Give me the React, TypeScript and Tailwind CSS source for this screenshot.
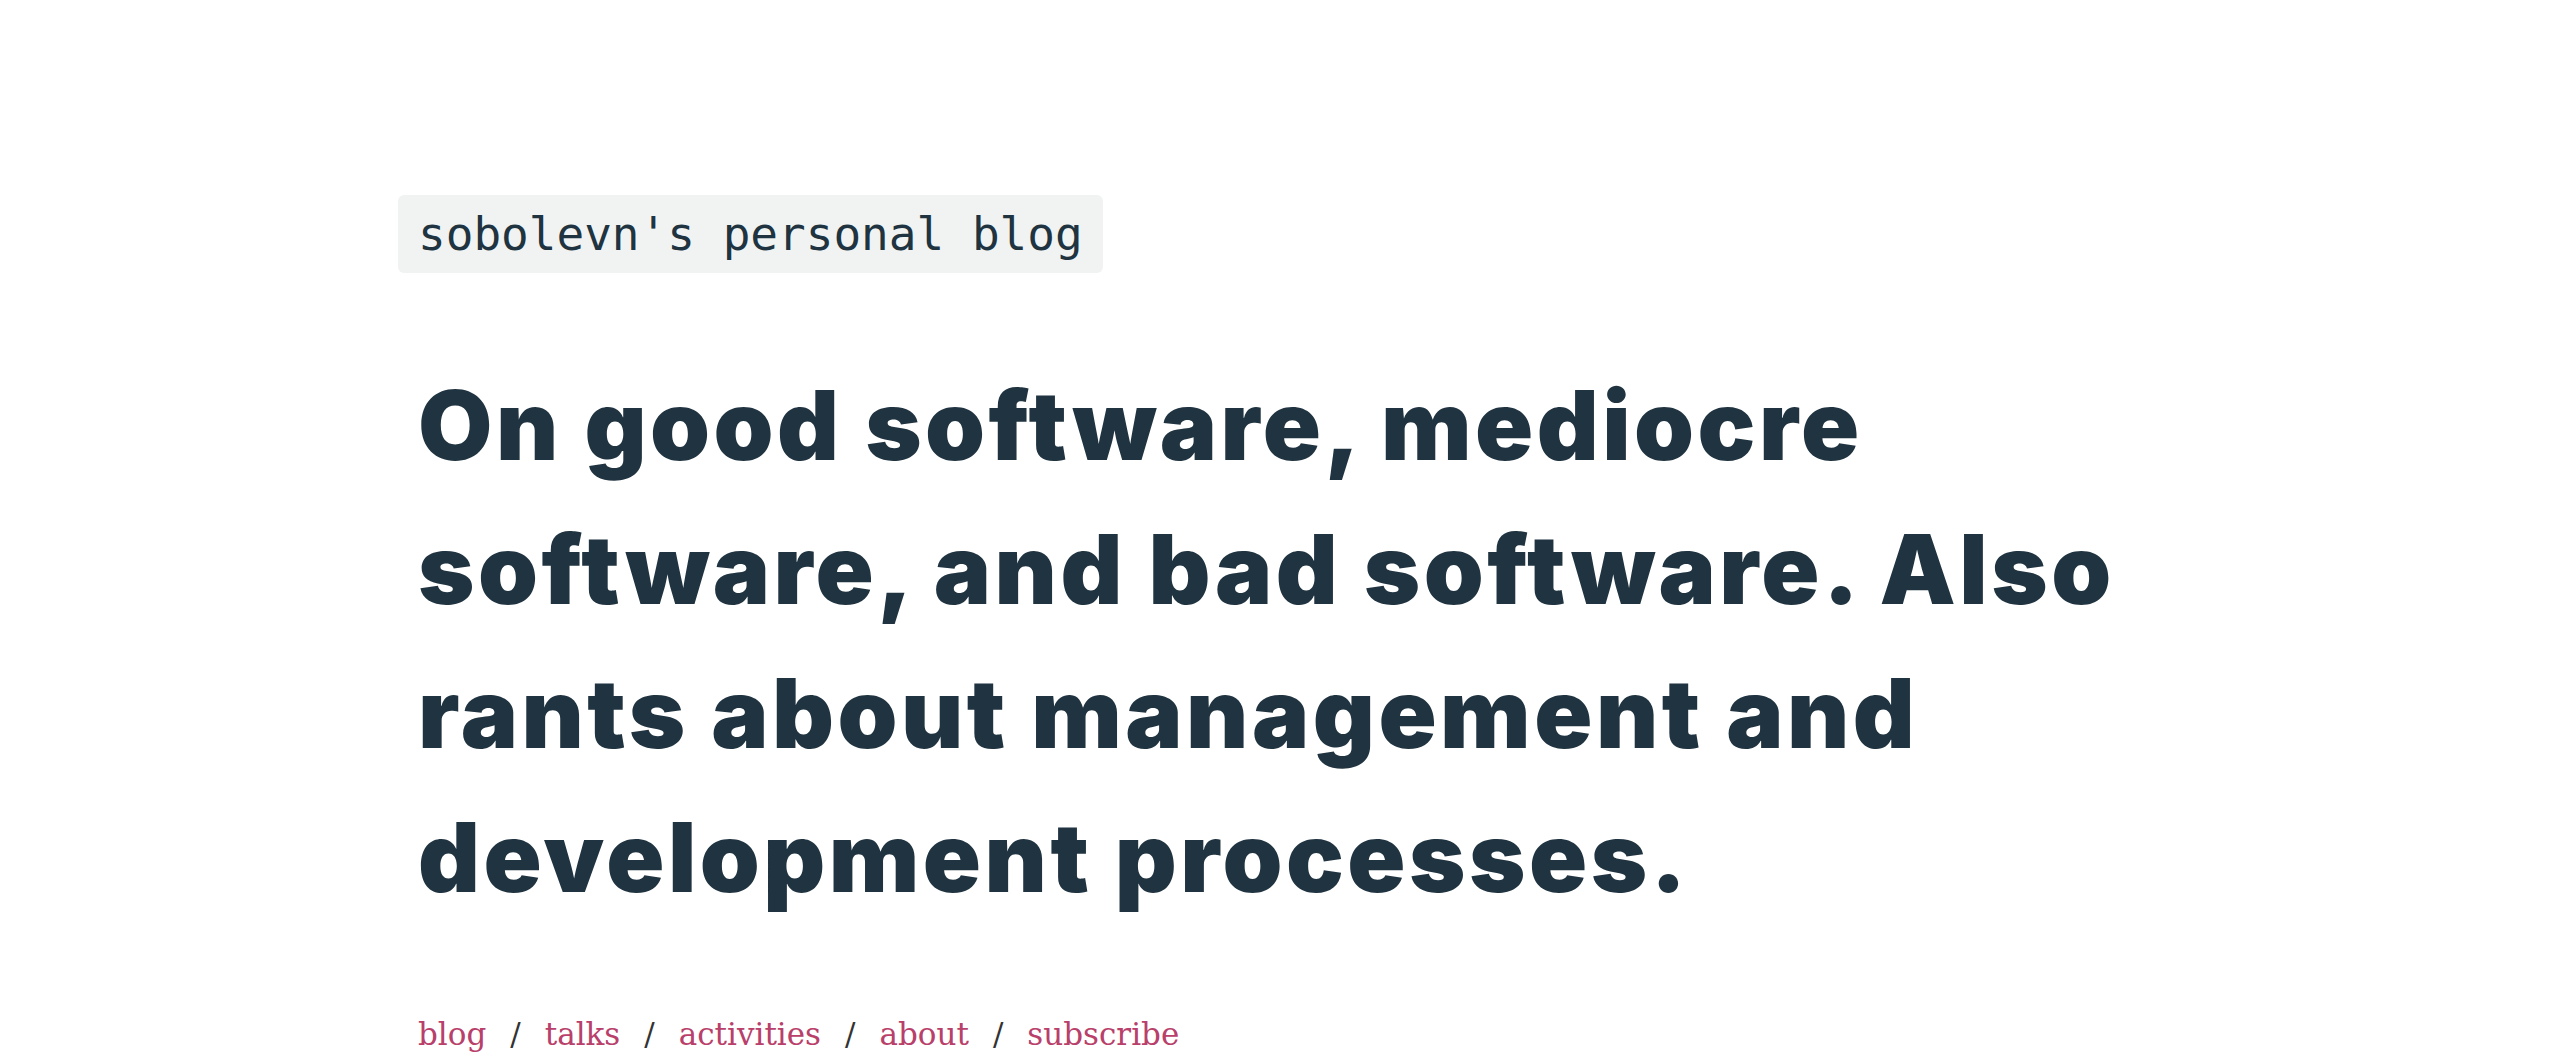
import React from "react";

const links = ["blog", "talks", "activities", "about", "subscribe"];

const App = () => {
  return (
    <div className="min-h-screen bg-white">
      <div className="mx-auto w-[1764px] pt-[195px]">
        <div className="inline-flex h-[78px] items-center rounded-md bg-[#f1f3f3] px-5">
          <span className="font-['DejaVu_Sans_Mono',monospace] text-[46px] leading-[78px] text-[#203340]">
            sobolevn's personal blog
          </span>
        </div>
        <h1 className="mt-[80px] pl-5 font-['Inter',sans-serif] text-[96px] font-black leading-[144px] tracking-[3.5px] text-[#203340]">
          On good software, mediocre software, and bad software. Also rants
          about management and development processes.
        </h1>
        <nav className="mt-[81px] flex items-center gap-[24px] pl-5 font-['DejaVu_Serif',serif] text-[31px] leading-[48px]">
          {links.map((l, i) => (
            <React.Fragment key={l}>
              {i > 0 && <span className="text-[#333]">/</span>}
              <a href="#" className="text-[#b8406a]">
                {l}
              </a>
            </React.Fragment>
          ))}
        </nav>
      </div>
    </div>
  );
};

export default App;
